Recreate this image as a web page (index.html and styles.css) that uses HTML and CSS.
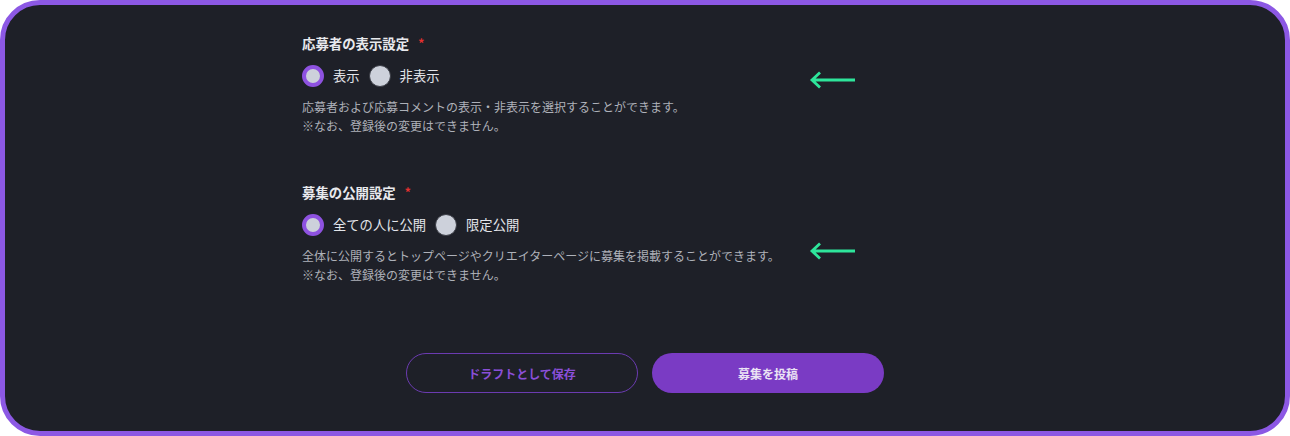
FILE: index.html
```html
<!DOCTYPE html>
<html lang="ja">
<head>
<meta charset="utf-8">
<link rel="stylesheet" href="styles.css">
</head>
<body>
<div class="frame">
  <div class="column">
    <section class="field">
      <div class="field-main">
        <div class="field-title">応募者の表示設定<span class="req">*</span></div>
        <div class="radios">
          <label class="radio"><span class="dot on"></span><span class="rlabel">表示</span></label>
          <label class="radio"><span class="dot"></span><span class="rlabel">非表示</span></label>
        </div>
        <p class="desc">応募者および応募コメントの表示・非表示を選択することができます。<br>※なお、登録後の変更はできません。</p>
      </div>
      <svg class="arrow arrow-1" width="48" height="18" viewBox="0 0 48 18"><path d="M46 9H3M11 1.5L3 9l8 7.5" fill="none" stroke="#2ee59b" stroke-width="2.8" stroke-linecap="butt" stroke-linejoin="miter"/></svg>
    </section>
    <section class="field second">
      <div class="field-main">
        <div class="field-title">募集の公開設定<span class="req">*</span></div>
        <div class="radios">
          <label class="radio"><span class="dot on"></span><span class="rlabel">全ての人に公開</span></label>
          <label class="radio"><span class="dot"></span><span class="rlabel">限定公開</span></label>
        </div>
        <p class="desc">全体に公開するとトップページやクリエイターページに募集を掲載することができます。<br>※なお、登録後の変更はできません。</p>
      </div>
      <svg class="arrow arrow-2" width="48" height="18" viewBox="0 0 48 18"><path d="M46 9H3M11 1.5L3 9l8 7.5" fill="none" stroke="#2ee59b" stroke-width="2.8" stroke-linecap="butt" stroke-linejoin="miter"/></svg>
    </section>
    <div class="actions">
      <button class="btn btn-outline">ドラフトとして保存</button>
      <button class="btn btn-fill">募集を投稿</button>
    </div>
  </div>
</div>
</body>
</html>
```
FILE: styles.css
```css
* { box-sizing: border-box; }
html, body { margin: 0; padding: 0; background: #ffffff; }
body {
  font-family: "Noto Sans CJK JP", "Noto Sans", sans-serif;
  width: 1290px;
  height: 436px;
}
.frame {
  width: 1290px;
  height: 436px;
  border: 5px solid #8c58e4;
  border-radius: 40px;
  background: #1e2028;
  padding-top: 28px;
}
.column {
  width: 688px;
  margin: 0 auto;
  padding-left: 1px;
}
.field {
  display: flex;
  align-items: flex-start;
}
.field.second { margin-top: 47px; }
.field-main { width: 507px; }
.field-title {
  font-size: 13.4px;
  line-height: 20px;
  font-weight: 700;
  color: #e8e9ed;
}
.req { color: #e5302f; font-size: 12px; margin-left: 9px; position: relative; top: -1px; }
.radios {
  display: flex;
  align-items: center;
  margin-top: 11px;
  height: 22px;
  gap: 9px;
}
.radio { display: flex; align-items: center; }
.dot {
  width: 22px;
  height: 22px;
  border-radius: 50%;
  background: #cdd1db;
  border: 1px solid #3b3d46;
}
.dot.on { border: 4px solid #8e52e0; }
.rlabel {
  margin-left: 9px;
  font-size: 13.3px;
  color: #e3e5ea;
  line-height: 20px;
}
.desc {
  margin: 10px 0 0;
  font-size: 12px;
  line-height: 19px;
  color: #aeb1b9;
  white-space: nowrap;
}
.arrow { flex: none; }
.arrow-1 { margin-top: 38px; }
.arrow-2 { margin-top: 60px; }
.actions {
  display: flex;
  justify-content: center;
  gap: 14px;
  margin-top: 69px;
  padding-right: 1px;
}
.btn {
  width: 232px;
  height: 40px;
  border-radius: 20px;
  font-family: inherit;
  font-size: 12px;
  font-weight: 700;
}
.btn-outline {
  background: transparent;
  border: 1px solid #6b3bb1;
  color: #8a4fd8;
}
.btn-fill {
  background: #7a3bc4;
  border: none;
  color: #ebe4f4;
}
```
